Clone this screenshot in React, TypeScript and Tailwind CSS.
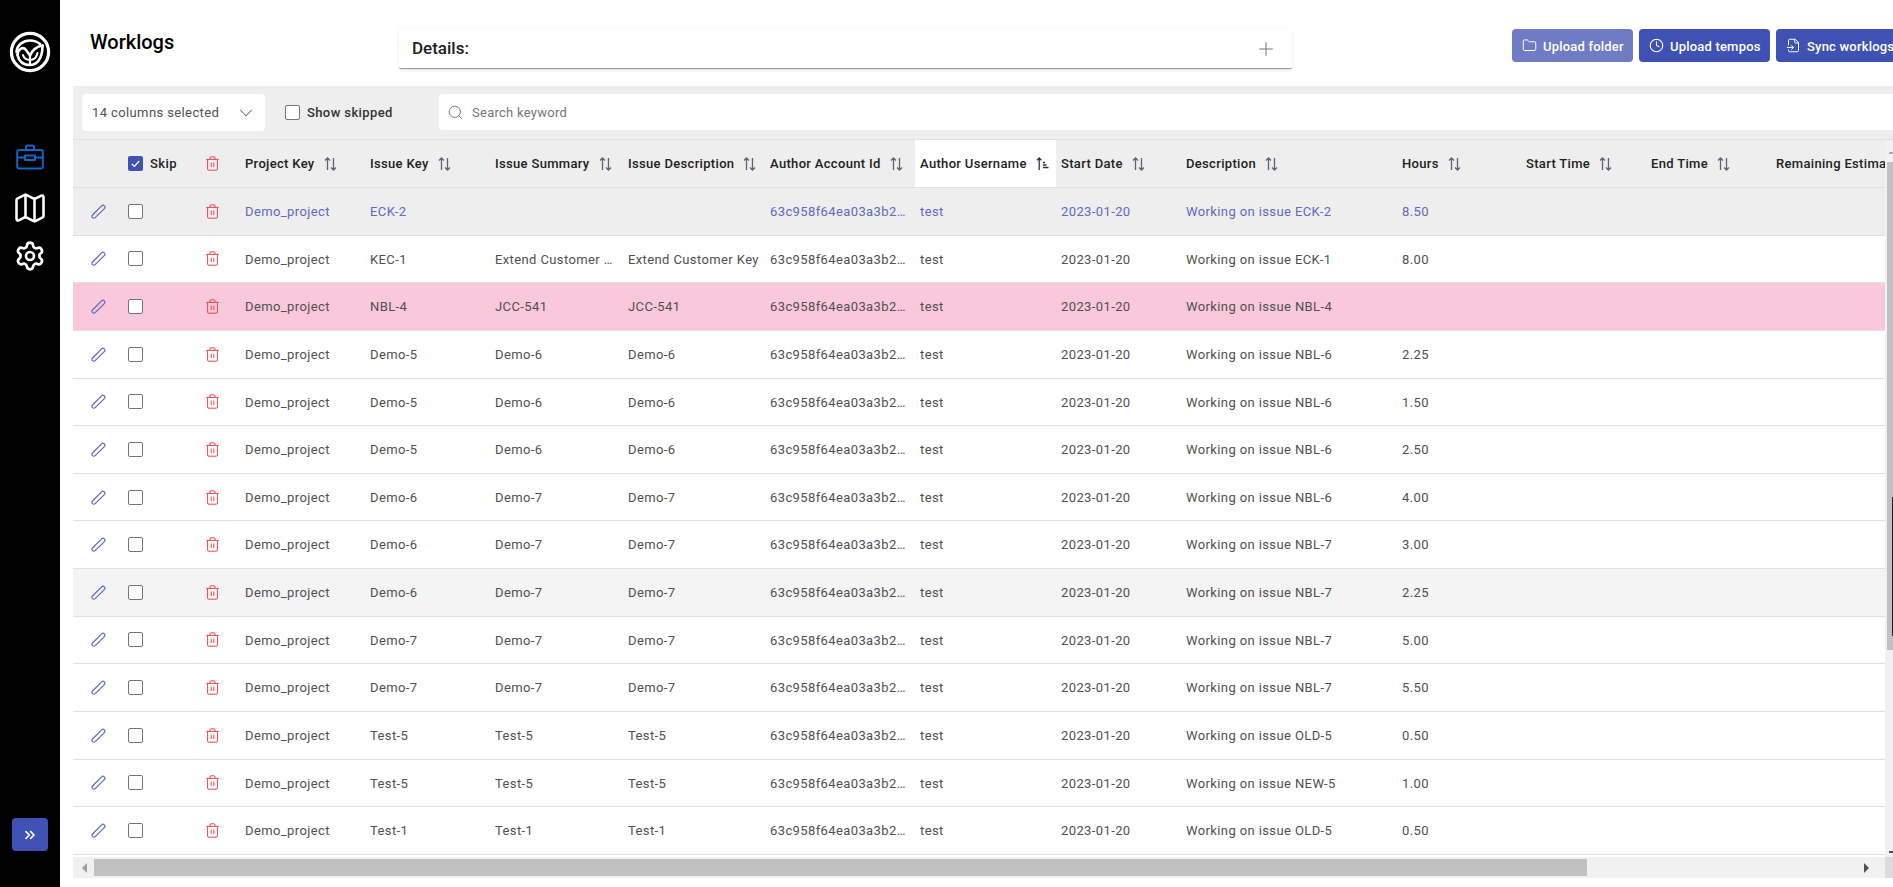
import { ChevronDown, ChevronsRight, Clock, FileInput, Folder, Map as MapIcon, Plus, Search, Settings } from 'lucide-react';

const font = "font-['Roboto',sans-serif]";

// column widths, first three are the action columns
const cols = {
    edit: 'w-[50px]',
    skip: 'w-[78px]',
    del: 'w-[39px]',
    project: 'w-[125px]',
    issue: 'w-[125px]',
    summary: 'w-[133px]',
    desc: 'w-[142px]',
    account: 'w-[150px]',
    username: 'w-[141px]',
    start: 'w-[125px]',
    description: 'w-[216px]',
    hours: 'w-[124px]',
    startTime: 'w-[125px]',
    endTime: 'w-[125px]',
    remaining: 'w-[140px]',
};

type Row = {
    issue: string;
    summary?: string;
    desc?: string;
    work: string;
    hours?: string;
    tone?: 'active' | 'pink' | 'grey';
};

const rows: Row[] = [
    { issue: 'ECK-2', work: 'ECK-2', hours: '8.50', tone: 'active' },
    { issue: 'KEC-1', summary: 'Extend Customer …', desc: 'Extend Customer Key', work: 'ECK-1', hours: '8.00' },
    { issue: 'NBL-4', summary: 'JCC-541', desc: 'JCC-541', work: 'NBL-4', tone: 'pink' },
    { issue: 'Demo-5', summary: 'Demo-6', desc: 'Demo-6', work: 'NBL-6', hours: '2.25' },
    { issue: 'Demo-5', summary: 'Demo-6', desc: 'Demo-6', work: 'NBL-6', hours: '1.50' },
    { issue: 'Demo-5', summary: 'Demo-6', desc: 'Demo-6', work: 'NBL-6', hours: '2.50' },
    { issue: 'Demo-6', summary: 'Demo-7', desc: 'Demo-7', work: 'NBL-6', hours: '4.00' },
    { issue: 'Demo-6', summary: 'Demo-7', desc: 'Demo-7', work: 'NBL-7', hours: '3.00' },
    { issue: 'Demo-6', summary: 'Demo-7', desc: 'Demo-7', work: 'NBL-7', hours: '2.25', tone: 'grey' },
    { issue: 'Demo-7', summary: 'Demo-7', desc: 'Demo-7', work: 'NBL-7', hours: '5.00' },
    { issue: 'Demo-7', summary: 'Demo-7', desc: 'Demo-7', work: 'NBL-7', hours: '5.50' },
    { issue: 'Test-5', summary: 'Test-5', desc: 'Test-5', work: 'OLD-5', hours: '0.50' },
    { issue: 'Test-5', summary: 'Test-5', desc: 'Test-5', work: 'NEW-5', hours: '1.00' },
    { issue: 'Test-1', summary: 'Test-1', desc: 'Test-1', work: 'OLD-5', hours: '0.50' },
];

function Logo() {
    return (
        <svg width="42" height="42" viewBox="0 0 42 42" fill="none" stroke="white" strokeLinecap="round">
            <circle cx="21" cy="21" r="18.6" strokeWidth="3.2" />
            <path d="M7.5 21 C8 14 14 9.5 21 9.5 C25 9.5 28 10.5 31 13" strokeWidth="2.6" />
            <path d="M8.5 24 C9 18 14 15 17 19 L21 24.5 C23.5 19 27.5 15.5 33.5 14.5" strokeWidth="2.6" strokeLinejoin="round" />
            <path d="M8.5 24 C10 31 15 34 21 34 C28 34 33.5 28 33.5 14.5" strokeWidth="2.6" />
            <path d="M14 24 C15 27.5 17.5 29 21 29 C24.5 29 27.5 27 28.5 22" strokeWidth="2" />
            <path d="M21 24.5 V33" strokeWidth="2.2" strokeLinecap="butt" />
        </svg>
    );
}

function BriefcaseIcon() {
    return (
        <svg width="28" height="26" viewBox="0 0 28 26" fill="none" stroke="#1565c0" strokeWidth="2" strokeLinejoin="round">
            <rect x="1.2" y="6" width="25.6" height="18.5" rx="2" />
            <path d="M10 6 V3 a1.5 1.5 0 0 1 1.5 -1.5 h5 a1.5 1.5 0 0 1 1.5 1.5 V6" />
            <path d="M1.2 13.5 H9 M19 13.5 H26.8" />
            <rect x="9" y="11.5" width="10" height="4.5" />
        </svg>
    );
}

function EditIcon() {
    return (
        <svg width="15" height="15" viewBox="0 0 15 15" fill="none" stroke="#5c6bc0" strokeWidth="1.2">
            <path d="M1.5 11 L10.6 1.9 a1.9 1.9 0 0 1 2.7 2.7 L4.2 13.7 a1.9 1.9 0 0 1 -2.7 0 a1.9 1.9 0 0 1 0 -2.7 Z" />
        </svg>
    );
}

function TrashIcon() {
    return (
        <svg width="13" height="15" viewBox="0 0 13 15" fill="none" stroke="#e5484d" strokeWidth="1">
            <path d="M0.2 3.4 H12.8" />
            <path d="M4 3.4 V1.8 a1 1 0 0 1 1 -1 h3 a1 1 0 0 1 1 1 V3.4" />
            <path d="M1.6 3.4 V13 a1.2 1.2 0 0 0 1.2 1.2 h7.4 a1.2 1.2 0 0 0 1.2 -1.2 V3.4" />
            <path d="M5.2 6.5 V11 M7.8 6.5 V11" />
        </svg>
    );
}

function SortIcon() {
    return (
        <svg width="13" height="14" viewBox="0 0 13 14" fill="none" stroke="#5a6472" strokeWidth="1.3">
            <path d="M3.5 13 V1 M1 3.5 L3.5 1 L6 3.5" />
            <path d="M9.5 1 V13 M7 10.5 L9.5 13 L12 10.5" />
        </svg>
    );
}

function SortAscIcon() {
    return (
        <svg width="13" height="14" viewBox="0 0 13 14" fill="none" stroke="#2b3340" strokeWidth="1.3">
            <path d="M3.2 13 V1 M1 3.2 L3.2 1 L5.4 3.2" />
            <path d="M7 5.5 H9 M7 8 H10.5 M7 10.5 H12.5" />
        </svg>
    );
}

function Checkbox({ checked }: { checked?: boolean }) {
    if (checked) {
        return (
            <span className="flex h-[15px] w-[15px] items-center justify-center rounded-[2px] bg-[#3f51b5]">
                <svg width="9" height="8" viewBox="0 0 9 8" fill="none" stroke="white" strokeWidth="1.2">
                    <path d="M0.8 4 L3.4 6.4 L8.2 1" />
                </svg>
            </span>
        );
    }
    return <span className="block h-[15px] w-[15px] rounded-[2px] border border-[#757575] bg-white" />;
}

function HeaderCell({ width, label, active, noSort }: { width: string; label: string; active?: boolean; noSort?: boolean }) {
    return (
        <div className={`${width} flex h-full shrink-0 items-center overflow-hidden whitespace-nowrap pl-[5px] ${active ? 'bg-white' : ''}`}>
            <span className="text-[13px] font-medium tracking-[0.025em] text-[#212121]">{label}</span>
            {!noSort && (
                <span className="ml-[9px] shrink-0">{active ? <SortAscIcon /> : <SortIcon />}</span>
            )}
        </div>
    );
}

function Cell({ width, children }: { width: string; children?: React.ReactNode }) {
    return <div className={`${width} shrink-0 overflow-hidden whitespace-nowrap pl-[5px] pt-px`}>{children}</div>;
}

function UploadButton({ icon, label, faded, width }: { icon: React.ReactNode; label: string; faded?: boolean; width: string }) {
    return (
        <div className={`${width} flex h-[33px] shrink-0 items-center gap-[6px] rounded-[4px] pl-[10px] text-[13px] font-medium tracking-[0.015em] text-white ${faded ? 'bg-[#6f7cc5]' : 'bg-[#3f51b5]'}`}>
            {icon}
            <span className="whitespace-nowrap pt-[2px]">{label}</span>
        </div>
    );
}

function ScrollArrow({ dir }: { dir: 'left' | 'right' }) {
    return dir === 'left'
        ? <span className="h-0 w-0 border-y-[5px] border-r-[5px] border-y-transparent border-r-[#9e9e9e]" />
        : <span className="h-0 w-0 border-y-[5px] border-l-[5px] border-y-transparent border-l-[#505050]" />;
}

export default function App() {
    return (
        <div className={`${font} flex h-[887px] w-[1893px] overflow-hidden bg-white`}>
            <aside className="flex w-[60px] shrink-0 flex-col items-center bg-black pb-[36px] pt-[31px]">
                <Logo />
                <div className="mt-[71px] flex flex-col items-center">
                    <BriefcaseIcon />
                    <span className="mt-[20px]"><MapIcon size={36} color="white" strokeWidth={1.7} /></span>
                    <span className="mt-[14px]"><Settings size={32} color="white" strokeWidth={2} /></span>
                </div>
                <div className="mt-auto flex h-[33px] w-[36px] items-center justify-center rounded-[4px] bg-[#3f51b5]">
                    <ChevronsRight size={16} color="white" strokeWidth={2.5} />
                </div>
            </aside>

            <main className="flex min-w-0 flex-1 flex-col pl-[13px]">
                <header className="flex h-[86px] shrink-0 items-start pt-[29px]">
                    <h1 className="w-[326px] shrink-0 pl-[17px] text-[20px] font-medium leading-[26px] text-black">Worklogs</h1>
                    <div className="flex h-[40px] w-[893px] shrink-0 items-center justify-between rounded-[2px] border-b border-[#999] bg-white pl-[13px] pr-[15px] shadow-[0_1px_3px_rgba(0,0,0,0.12)]">
                        <span className="pt-px text-[17px] font-medium text-[#212121]">Details:</span>
                        <Plus size={22} color="#666" strokeWidth={1} />
                    </div>
                    <div className="ml-[220px] flex gap-[6px]">
                        <UploadButton width="w-[121px]" faded label="Upload folder" icon={<Folder size={15} strokeWidth={1.6} />} />
                        <UploadButton width="w-[131px]" label="Upload tempos" icon={<Clock size={15} strokeWidth={1.8} />} />
                        <UploadButton width="w-[125px]" label="Sync worklogs" icon={<FileInput size={15} strokeWidth={1.6} />} />
                    </div>
                </header>

                <section className="flex h-[54px] shrink-0 items-start gap-[20px] border-b border-[#e2e2e2] bg-[#eeeeee] pl-[9px] pt-[8px]">
                    <div className="flex h-[37px] w-[183px] shrink-0 items-center justify-between rounded-[4px] bg-white pl-[10px] pr-[8px] text-[13px] tracking-[0.03em] text-[#505050]">
                        <span>14 columns selected</span>
                        <ChevronDown size={22} color="#666" strokeWidth={1.1} />
                    </div>
                    <label className="flex h-[37px] w-[134px] shrink-0 items-center gap-[7px] text-[13px] font-medium tracking-[0.03em] text-[#333]">
                        <Checkbox />
                        Show skipped
                    </label>
                    <div className="flex h-[36px] min-w-0 flex-1 items-center gap-[8px] rounded-l-[4px] bg-white pl-[8px] text-[13px] tracking-[0.02em] text-[#757575]">
                        <Search size={17} color="#757575" strokeWidth={1.3} />
                        <span className="pt-px">Search keyword</span>
                    </div>
                </section>

                <div className="flex min-h-0 w-full">
                    <div className="min-w-0 flex-1 overflow-hidden">
                        <div className="flex h-[48px] items-center border-b border-[#e0e0e0] bg-[#eeeeee]">
                            <div className={`${cols.edit} shrink-0`} />
                            <div className={`${cols.skip} flex shrink-0 items-center gap-[7px] pl-[5px] text-[13px] font-medium tracking-[0.03em] text-[#212121]`}>
                                <Checkbox checked />
                                Skip
                            </div>
                            <div className={`${cols.del} flex shrink-0 items-center pl-[5px]`}><TrashIcon /></div>
                            <HeaderCell width={cols.project} label="Project Key" />
                            <HeaderCell width={cols.issue} label="Issue Key" />
                            <HeaderCell width={cols.summary} label="Issue Summary" />
                            <HeaderCell width={cols.desc} label="Issue Description" />
                            <HeaderCell width={cols.account} label="Author Account Id" />
                            <HeaderCell width={cols.username} label="Author Username" active />
                            <HeaderCell width={cols.start} label="Start Date" />
                            <HeaderCell width={cols.description} label="Description" />
                            <HeaderCell width={cols.hours} label="Hours" />
                            <HeaderCell width={cols.startTime} label="Start Time" />
                            <HeaderCell width={cols.endTime} label="End Time" />
                            <HeaderCell width={cols.remaining} label="Remaining Estimate" noSort />
                        </div>

                        {rows.map((r, i) => {
                            const bg = r.tone === 'active' ? 'bg-[#eeeeee]' : r.tone === 'pink' ? 'bg-[#f9c8da]' : r.tone === 'grey' ? 'bg-[#f4f4f4]' : 'bg-white';
                            const text = r.tone === 'active' ? 'text-[#5c6bc0]' : 'text-[#505050]';
                            return (
                                <div key={i} className={`flex h-[47.64px] items-center border-b border-[#e0e0e0] text-[13px] tracking-[0.03em] ${bg} ${text}`}>
                                    <div className={`${cols.edit} flex shrink-0 justify-start pl-[18px]`}><EditIcon /></div>
                                    <div className={`${cols.skip} shrink-0 pl-[5px]`}><Checkbox /></div>
                                    <div className={`${cols.del} flex shrink-0 pl-[5px]`}><TrashIcon /></div>
                                    <Cell width={cols.project}>Demo_project</Cell>
                                    <Cell width={cols.issue}>{r.issue}</Cell>
                                    <Cell width={cols.summary}>{r.summary}</Cell>
                                    <Cell width={cols.desc}>{r.desc}</Cell>
                                    <Cell width={cols.account}>63c958f64ea03a3b2…</Cell>
                                    <Cell width={cols.username}>test</Cell>
                                    <Cell width={cols.start}>2023-01-20</Cell>
                                    <Cell width={cols.description}>Working on issue {r.work}</Cell>
                                    <Cell width={cols.hours}>{r.hours}</Cell>
                                </div>
                            );
                        })}
                    </div>

                    <div className="flex h-[717px] w-[8px] shrink-0 flex-col bg-[#f1f1f1] pl-[2px] pt-[12px]">
                        <span className="ml-auto block h-[2px] w-[4px] bg-[#aaa]" />
                        <div className="mt-[8px] flex h-[488px] justify-end bg-[#c1c1c1] pt-[335px]">
                            <span className="block h-[139px] w-px bg-[#222]" />
                        </div>
                        <span className="mb-[4px] ml-auto mt-auto block h-[2px] w-[4px] bg-[#505050]" />
                    </div>
                </div>

                <div className="flex h-[21px] shrink-0 items-center bg-[#f1f1f1]">
                    <div className="flex w-[21px] shrink-0 justify-center pl-px"><ScrollArrow dir="left" /></div>
                    <div className="h-[17px] w-[1493px] shrink-0 bg-[#c1c1c1]" />
                    <div className="flex flex-1 justify-end pr-[16px]"><ScrollArrow dir="right" /></div>
                    <div className="h-full w-[8px] shrink-0 bg-[#dcdcdc]" />
                </div>
            </main>
        </div>
    );
}
